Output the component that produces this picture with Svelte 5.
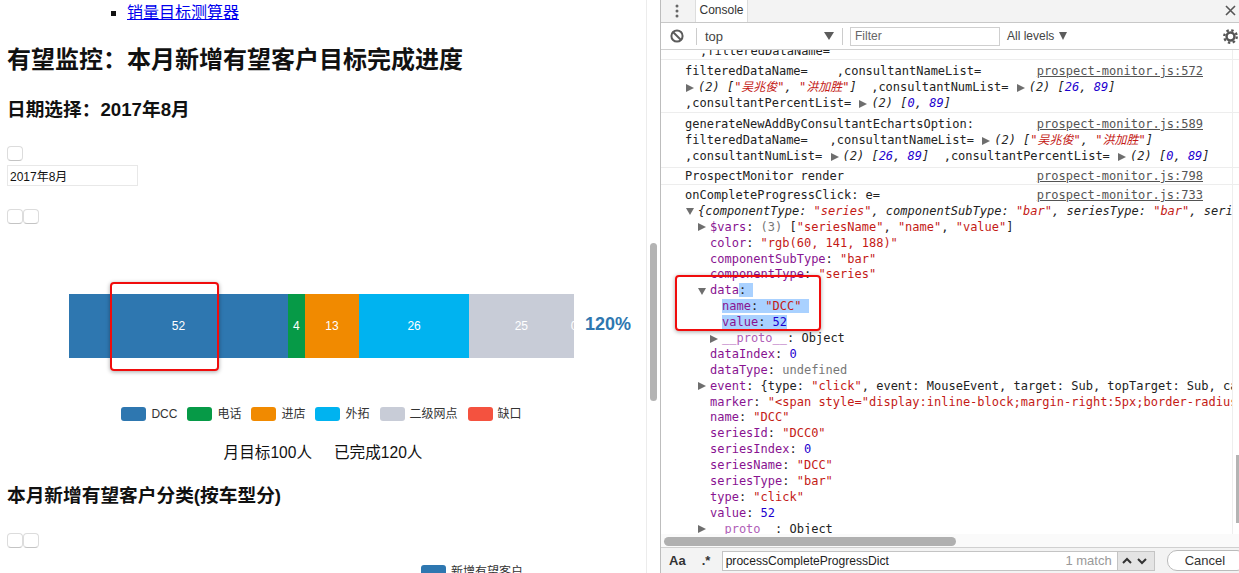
<script lang="ts">
  // One chart's worth of data plus the console dump beside it. Tokens are
  // [class, text]: k key, s string, n number, u muted, t plain.
  type Token = [string, string];
  type Line = { tokens: Token[]; link?: string; indent?: number; arrow?: 'right' | 'down'; italic?: boolean; selected?: boolean };

  const UNIT = 505 / 120;

  const segments = [
    { name: 'DCC', value: 52, color: '#2e77b0' },
    { name: '电话', value: 4, color: '#069a47' },
    { name: '进店', value: 13, color: '#f18a00' },
    { name: '外拓', value: 26, color: '#00b3f0' },
    { name: '二级网点', value: 25, color: '#c8ccd7' },
    { name: '缺口', value: 0, color: '#f4523f' },
  ];

  const names: Token[] = [['t', '(2) ['], ['s', '"吴兆俊"'], ['t', ', '], ['s', '"洪加胜"'], ['t', ']']];
  const nums: Token[] = [['t', '(2) ['], ['n', '26'], ['t', ', '], ['n', '89'], ['t', ']']];
  const pct: Token[] = [['t', '(2) ['], ['n', '0'], ['t', ', '], ['n', '89'], ['t', ']']];

  const kv = (key: string, cls: string, value: string): Token[] => [['k', key], ['t', ': '], [cls, value]];
</script>

{#snippet tri(dir)}
  <svg class="tri" width="8" height="8" viewBox="0 0 8 8"><path d={dir === 'down' ? 'M0 1h8L4 8z' : 'M0 0l8 4-8 4z'} fill="#6e6e6e" /></svg>
{/snippet}

{#snippet tokens(list)}
  {#each list as [cls, text]}<span class={cls}>{text}</span>{/each}
{/snippet}

{#snippet line(l: Line)}
  <div class="line" style:padding-left="{l.indent ?? 0}px">
    <span class="msg" class:italic={l.italic}>
      {#if l.arrow}{@render tri(l.arrow)}{/if}{#if l.selected}<span class="sel">{@render tokens(l.tokens)}</span>{:else}{@render tokens(l.tokens)}{/if}
    </span>
    {#if l.link}<span class="link">{l.link}</span>{/if}
  </div>
{/snippet}

<div class="screen">
  <main class="page">
    <ul class="nav"><li><a href="#calc">销量目标测算器</a></li></ul>
    <h1>有望监控：本月新增有望客户目标完成进度</h1>
    <h2>日期选择：2017年8月</h2>
    <div class="btns first"><button aria-label="选择"></button></div>
    <input class="date" value="2017年8月" aria-label="日期" />
    <div class="btns second"><button aria-label="一"></button><button aria-label="二"></button></div>

    <div class="chart">
      <div class="bar">
        {#each segments as s}
          <div class="seg" style:width="{s.value * UNIT}px" style:background={s.color}><span>{s.value}</span></div>
        {/each}
      </div>
      <span class="percent">120%</span>
    </div>

    <div class="legend">
      {#each segments as s}
        <span class="item"><i style:background={s.color}></i>{s.name}</span>
      {/each}
    </div>

    <p class="summary"><span>月目标100人</span><span>已完成120人</span></p>

    <h2 class="sub">本月新增有望客户分类(按车型分)</h2>
    <div class="btns third"><button aria-label="一"></button><button aria-label="二"></button></div>
    <div class="legend second-legend"><span class="item"><i style:background="#2e77b0"></i>新增有望客户</span></div>

    <div class="callout left"></div>
  </main>

  <div class="gutter"><div class="thumb"></div></div>

  <section class="devtools">
    <div class="tabs">
      <svg class="dots" width="4" height="14" viewBox="0 0 4 14"><circle cx="2" cy="2" r="1.5" /><circle cx="2" cy="7" r="1.5" /><circle cx="2" cy="12" r="1.5" /></svg>
      <div class="tab">Console</div>
      <svg class="close" width="11" height="11" viewBox="0 0 11 11"><path d="M1 1l9 9M10 1l-9 9" stroke="#555" stroke-width="1.6" /></svg>
    </div>

    <div class="toolbar">
      <svg class="block" width="14" height="14" viewBox="0 0 14 14"><circle cx="7" cy="7" r="5.6" fill="none" stroke="#5c5c5c" stroke-width="2" /><path d="M3 3l8 8" stroke="#5c5c5c" stroke-width="2" /></svg>
      <span class="divider"></span>
      <span class="context">top</span>
      <svg width="10" height="8" viewBox="0 0 10 8"><path d="M0 0h10L5 8z" fill="#5c5c5c" /></svg>
      <span class="divider gap"></span>
      <div class="filter">Filter</div>
      <span class="levels">All levels</span>
      <svg width="8" height="8" viewBox="0 0 8 8"><path d="M0 0h8L4 8z" fill="#5c5c5c" /></svg>
      <svg class="gear" width="15" height="15" viewBox="0 0 16 16"><circle cx="8" cy="8" r="4.2" fill="none" stroke="#555" stroke-width="2.6" /><circle cx="8" cy="8" r="6.7" fill="none" stroke="#555" stroke-width="2.4" stroke-dasharray="2.6 2.66" /></svg>
    </div>

    <div class="output">
      <div class="row partial">{@render line({ tokens: [['t', ',filteredDataName=']], indent: 15 })}</div>

      <div class="row">
        {@render line({ tokens: [['t', 'filteredDataName=    ,consultantNameList=']], link: 'prospect-monitor.js:572' })}
        <div class="line"><span class="msg">{@render tri('right')}<span class="italic">{@render tokens(names)}</span>{'  ,consultantNumList= '}{@render tri('right')}<span class="italic">{@render tokens(nums)}</span></span></div>
        <div class="line"><span class="msg">{',consultantPercentList= '}{@render tri('right')}<span class="italic">{@render tokens(pct)}</span></span></div>
      </div>

      <div class="row tall">
        {@render line({ tokens: [['t', 'generateNewAddByConsultantEchartsOption:']], link: 'prospect-monitor.js:589' })}
        <div class="line"><span class="msg">{'filteredDataName=   ,consultantNameList= '}{@render tri('right')}<span class="italic">{@render tokens(names)}</span></span></div>
        <div class="line"><span class="msg">{',consultantNumList= '}{@render tri('right')}<span class="italic">{@render tokens(nums)}</span>{'  ,consultantPercentList= '}{@render tri('right')}<span class="italic">{@render tokens(pct)}</span></span></div>
      </div>

      <div class="row single">
        {@render line({ tokens: [['t', 'ProspectMonitor render']], link: 'prospect-monitor.js:798' })}
      </div>

      <div class="row object">
        {@render line({ tokens: [['t', 'onCompleteProgressClick: e=']], link: 'prospect-monitor.js:733' })}
        {@render line({ arrow: 'down', italic: true, tokens: [['t', '{componentType: '], ['s', '"series"'], ['t', ', componentSubType: '], ['s', '"bar"'], ['t', ', seriesType: '], ['s', '"bar"'], ['t', ', seriesIndex: 0']] })}
        {@render line({ arrow: 'right', indent: 12, tokens: [['k', '$vars'], ['t', ': '], ['u', '(3) '], ['t', '['], ['s', '"seriesName"'], ['t', ', '], ['s', '"name"'], ['t', ', '], ['s', '"value"'], ['t', ']']] })}
        {@render line({ indent: 25, tokens: kv('color', 's', '"rgb(60, 141, 188)"') })}
        {@render line({ indent: 25, tokens: kv('componentSubType', 's', '"bar"') })}
        {@render line({ indent: 25, tokens: kv('componentType', 's', '"series"') })}
        {@render line({ arrow: 'down', indent: 12, tokens: [['k', 'data'], ['sel', ': ']] })}
        {@render line({ indent: 37, selected: true, tokens: kv('name', 's', '"DCC" ') })}
        {@render line({ indent: 37, selected: true, tokens: kv('value', 'n', '52') })}
        {@render line({ arrow: 'right', indent: 24, tokens: [['u2', '__proto__'], ['t', ': Object']] })}
        {@render line({ indent: 25, tokens: kv('dataIndex', 'n', '0') })}
        {@render line({ indent: 25, tokens: kv('dataType', 'u', 'undefined') })}
        {@render line({ arrow: 'right', indent: 12, tokens: [['k', 'event'], ['t', ': {type: '], ['s', '"click"'], ['t', ', event: MouseEvent, target: Sub, topTarget: Sub, cancelBubble: false']] })}
        {@render line({ indent: 25, tokens: kv('marker', 's', '"<span style="display:inline-block;margin-right:5px;border-radius:10px;width:10px"') })}
        {@render line({ indent: 25, tokens: kv('name', 's', '"DCC"') })}
        {@render line({ indent: 25, tokens: kv('seriesId', 's', '"DCC0"') })}
        {@render line({ indent: 25, tokens: kv('seriesIndex', 'n', '0') })}
        {@render line({ indent: 25, tokens: kv('seriesName', 's', '"DCC"') })}
        {@render line({ indent: 25, tokens: kv('seriesType', 's', '"bar"') })}
        {@render line({ indent: 25, tokens: kv('type', 's', '"click"') })}
        {@render line({ indent: 25, tokens: kv('value', 'n', '52') })}
        {@render line({ arrow: 'right', indent: 12, tokens: [['u2', '__proto__'], ['t', ': Object']] })}
      </div>

      <div class="vtrack"></div>
      <div class="vbar"></div>
      <div class="callout right"></div>
    </div>

    <div class="hscroll"><div class="hthumb"></div></div>

    <div class="search">
      <span class="aa">Aa</span>
      <span class="regex">.*</span>
      <div class="query"><span>processCompleteProgressDict</span><span class="count">1 match</span></div>
      <div class="steps">
        <svg width="12" height="8" viewBox="0 0 12 8"><path d="M2 6l4-4 4 4" fill="none" stroke="#333" stroke-width="2" /></svg>
        <svg width="12" height="8" viewBox="0 0 12 8"><path d="M2 2l4 4 4-4" fill="none" stroke="#333" stroke-width="2" /></svg>
      </div>
      <button class="cancel">Cancel</button>
    </div>
  </section>
</div>

<style>
  :global(body) {
    margin: 0;
    overflow: hidden;
    background: #fff;
  }

  .screen {
    display: flex;
    width: 1239px;
    height: 573px;
    overflow: hidden;
    font-family: 'Liberation Sans', 'Noto Sans CJK SC', sans-serif;
    color: #111;
  }

  .page {
    position: relative;
    flex: 0 0 646px;
    padding-left: 7px;
    box-sizing: border-box;
    overflow: hidden;
  }

  .nav {
    margin: 1px 0 0;
    padding-left: 120px;
    list-style: square;
    font-size: 16px;
    line-height: 24px;
  }

  .nav a {
    color: #0000ee;
  }

  h1 {
    margin: 19px 0 0;
    font-size: 24px;
    line-height: 32px;
  }

  h2 {
    margin: 21px 0 0;
    font-size: 18.7px;
    line-height: 26px;
  }

  h2.sub {
    margin-top: 18px;
  }

  .btns {
    display: flex;
    height: 15px;
  }

  .btns.first {
    margin-top: 23px;
  }

  .btns.second {
    margin-top: 23px;
  }

  .btns.third {
    margin-top: 24px;
  }

  .btns button {
    width: 16px;
    height: 15px;
    padding: 0;
    background: #fff;
    border: 1px solid #dcdcdc;
    border-bottom-color: #c4c4c4;
    border-radius: 4px;
  }

  .date {
    display: block;
    width: 131px;
    height: 21px;
    margin-top: 4px;
    padding: 0 2px;
    box-sizing: border-box;
    border: 1px solid #e8e8e8;
    font: 12px/19px 'Liberation Sans', 'Noto Sans CJK SC', sans-serif;
    color: #111;
  }

  .chart {
    display: flex;
    align-items: center;
    margin-top: 70px;
    padding-left: 62px;
  }

  .bar {
    display: flex;
    width: 505px;
    height: 64px;
    overflow: hidden;
  }

  .seg {
    display: flex;
    flex: none;
    align-items: center;
    justify-content: center;
    font-size: 12px;
    color: #fff;
  }

  .percent {
    margin: -3px 0 0 11px;
    font-size: 18px;
    font-weight: 700;
    color: #2e77b0;
  }

  .legend {
    display: flex;
    justify-content: center;
    gap: 10px;
    margin: 49px 0 0 -10px;
    font-size: 12px;
    line-height: 14px;
    color: #333;
  }

  .item {
    display: flex;
    gap: 5px;
    white-space: nowrap;
  }

  .item i {
    width: 25px;
    height: 14px;
    border-radius: 3px;
  }

  .legend.second-legend {
    justify-content: flex-start;
    margin: 17px 0 0 414px;
  }

  .summary {
    display: flex;
    justify-content: center;
    gap: 22px;
    margin: 20px 0 0 -7px;
    font-size: 15.6px;
    line-height: 24px;
  }

  .callout {
    position: absolute;
    box-sizing: border-box;
    border: 2px solid #f00c0c;
    border-radius: 4px;
    box-shadow: 0 1px 4px rgba(0, 0, 0, 0.35);
  }

  .callout.left {
    left: 110px;
    top: 282px;
    width: 109px;
    height: 89px;
  }

  .callout.right {
    left: 14px;
    top: 225px;
    width: 146px;
    height: 56px;
  }

  .gutter {
    flex: 0 0 14px;
    box-sizing: border-box;
    border-left: 1px solid #ececec;
    padding: 243px 3px 0;
  }

  .thumb {
    height: 158px;
    border-radius: 4px;
    background: #b4b4b4;
  }

  .devtools {
    display: flex;
    flex: 1;
    flex-direction: column;
    min-width: 0;
    box-sizing: border-box;
    border-left: 1px solid #bdbdbd;
  }

  .tabs {
    display: flex;
    align-items: center;
    height: 23px;
    box-sizing: border-box;
    background: #f3f3f3;
    border-bottom: 1px solid #c8c8c8;
  }

  .dots {
    margin-left: 14px;
    fill: #666;
  }

  .tab {
    width: 53px;
    height: 22px;
    margin-left: 16px;
    box-sizing: border-box;
    background: #fff;
    border: solid #ddd;
    border-width: 0 1px;
    font-size: 12px;
    line-height: 21px;
    text-align: center;
    color: #333;
  }

  .close {
    margin: -2px 3px 0 auto;
  }

  .toolbar {
    display: flex;
    align-items: center;
    height: 27px;
    box-sizing: border-box;
    border-bottom: 1px solid #d0d0d0;
    font-size: 12px;
    color: #444;
  }

  .block {
    margin-left: 9px;
  }

  .divider {
    width: 1px;
    height: 17px;
    margin: 0 8px 0 12px;
    background: #ccc;
  }

  .divider.gap {
    margin: 0 7px 0 8px;
  }

  .context {
    width: 119px;
    font-size: 13px;
  }

  .filter {
    width: 150px;
    height: 19px;
    padding-left: 4px;
    box-sizing: border-box;
    border: 1px solid #cfcfcf;
    line-height: 17px;
    color: #666;
  }

  .levels {
    margin: 0 5px 0 7px;
  }

  .gear {
    margin: 0 1px 0 auto;
  }

  .output {
    position: relative;
    flex: 1;
    min-height: 0;
    overflow: hidden;
    font: 12px/16px 'DejaVu Sans Mono', 'Noto Sans CJK SC', monospace;
    color: #222;
  }

  .row {
    padding: 3px 36px 1px 24px;
    border-bottom: 1px solid #ededed;
  }

  .row.partial {
    display: flex;
    flex-direction: column;
    justify-content: flex-end;
    height: 10px;
    padding: 0 36px 0 24px;
    box-sizing: border-box;
  }

  .row.tall {
    padding-bottom: 3px;
  }

  .row.single {
    padding-top: 0;
    padding-bottom: 0;
  }

  .row.object {
    box-sizing: border-box;
    width: 571px;
    padding-right: 0;
    border-bottom: 0;
    overflow: hidden;
  }

  .row.object .link {
    position: absolute;
    right: 36px;
  }

  .line {
    display: flex;
    justify-content: space-between;
    flex: none;
    height: 16px;
    white-space: pre;
  }

  .row.object .line {
    height: 15.9px;
    line-height: 15.9px;
  }

  .tri {
    margin: 0 4px 0 1px;
    vertical-align: -0.5px;
  }

  .italic {
    font-style: italic;
  }

  .link {
    color: #545454;
    text-decoration: underline;
  }

  .k {
    color: #881391;
  }

  .s {
    color: #c41a16;
  }

  .n {
    color: #1c00cf;
  }

  .u {
    color: #777;
  }

  .u2 {
    color: #b060b8;
  }

  .sel {
    background: #a9d1ff;
  }

  .vtrack {
    position: absolute;
    top: 0;
    right: 0;
    bottom: 0;
    width: 6px;
    border-left: 1px solid #eee;
  }

  .vbar {
    position: absolute;
    top: 405px;
    right: 0;
    width: 3px;
    height: 68px;
    background: #b4b4b4;
  }

  .hscroll {
    height: 13px;
    padding: 3px 3px 0;
    box-sizing: border-box;
    background: #fafafa;
  }

  .hthumb {
    width: 292px;
    height: 9px;
    border-radius: 5px;
    background: #b0b0b0;
  }

  .search {
    display: flex;
    align-items: center;
    height: 26px;
    box-sizing: border-box;
    background: #f3f3f3;
    border-top: 1px solid #d0d0d0;
    font-size: 13px;
    color: #333;
  }

  .aa {
    margin-left: 8px;
    font-weight: 700;
  }

  .regex {
    flex: none;
    width: 20px;
    margin-left: 16px;
    font-weight: 700;
  }

  .query {
    display: flex;
    flex: none;
    justify-content: space-between;
    width: 396px;
    height: 20px;
    padding: 0 5px 0 3px;
    box-sizing: border-box;
    background: #fff;
    border: 1px solid #c4c4c4;
    font-size: 12.1px;
    line-height: 18px;
    color: #222;
  }

  .count {
    font-size: 13px;
    color: #999;
  }

  .steps {
    display: flex;
    flex: none;
    align-items: center;
    gap: 3px;
    width: 37px;
    height: 20px;
    padding-left: 3px;
    box-sizing: border-box;
    background: #e4e4e4;
    border: solid #c4c4c4;
    border-width: 1px 1px 1px 0;
  }

  .cancel {
    display: flex;
    flex: none;
    align-items: center;
    width: 80px;
    height: 21px;
    margin-left: 12px;
    padding: 0 0 0 17px;
    background: #fff;
    border: 1px solid #bbb;
    border-radius: 10px;
    font: 13px 'Liberation Sans', sans-serif;
    color: #333;
  }
</style>
